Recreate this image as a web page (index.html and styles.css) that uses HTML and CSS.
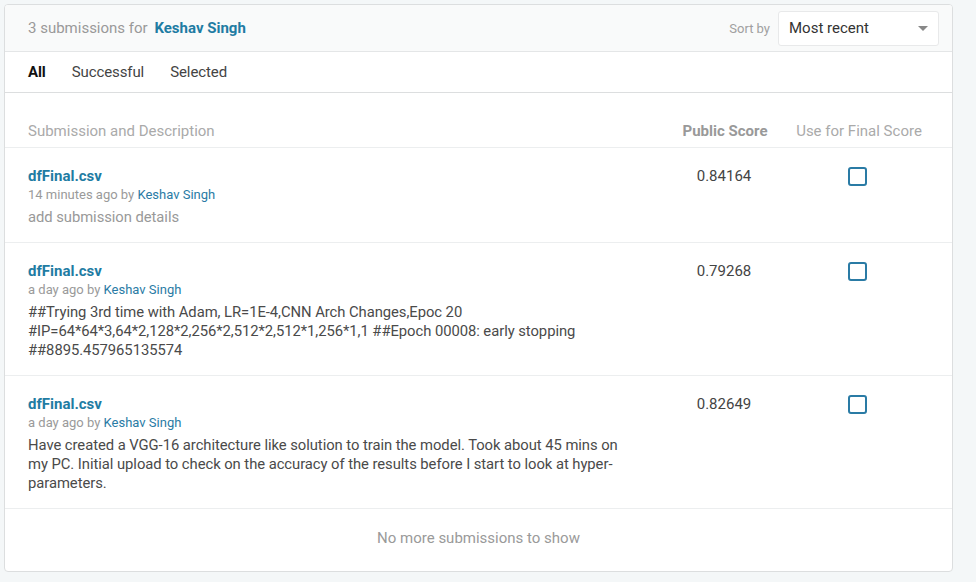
FILE: index.html
```html
<!DOCTYPE html>
<html>
<head>
<meta charset="utf-8">
<link rel="stylesheet" href="styles.css">
</head>
<body>
<div class="card">
  <div class="header">
    <div class="title"><span class="count">3 submissions for</span> <a class="user">Keshav Singh</a></div>
    <div class="sort">
      <span class="sort-label">Sort by</span>
      <div class="select"><span>Most recent</span><span class="caret"></span></div>
    </div>
  </div>
  <div class="tabs">
    <span class="tab active">All</span>
    <span class="tab">Successful</span>
    <span class="tab">Selected</span>
  </div>
  <div class="colhead">
    <div class="c-desc">Submission and Description</div>
    <div class="c-score">Public Score</div>
    <div class="c-final">Use for Final Score</div>
  </div>
  <div class="row">
    <div class="c-desc">
      <div class="file">dfFinal.csv</div>
      <div class="meta">14 minutes ago by <span class="by">Keshav Singh</span></div>
      <div class="desc muted">add submission details</div>
    </div>
    <div class="c-score score">0.84164</div>
    <div class="c-final"><span class="check"></span></div>
  </div>
  <div class="row">
    <div class="c-desc">
      <div class="file">dfFinal.csv</div>
      <div class="meta">a day ago by <span class="by">Keshav Singh</span></div>
      <div class="desc">##Trying 3rd time with Adam, LR=1E-4,CNN Arch Changes,Epoc 20<br>#IP=64*64*3,64*2,128*2,256*2,512*2,512*1,256*1,1 ##Epoch 00008: early stopping<br>##8895.457965135574</div>
    </div>
    <div class="c-score score">0.79268</div>
    <div class="c-final"><span class="check"></span></div>
  </div>
  <div class="row">
    <div class="c-desc">
      <div class="file">dfFinal.csv</div>
      <div class="meta">a day ago by <span class="by">Keshav Singh</span></div>
      <div class="desc">Have created a VGG-16 architecture like solution to train the model. Took about 45 mins on<br>my PC. Initial upload to check on the accuracy of the results before I start to look at hyper-<br>parameters.</div>
    </div>
    <div class="c-score score">0.82649</div>
    <div class="c-final"><span class="check"></span></div>
  </div>
  <div class="footer">No more submissions to show</div>
</div>
</body>
</html>
```
FILE: styles.css
```css
* { box-sizing: border-box; }
html, body { margin: 0; }
body {
  background: #f4f7f8;
  font-family: Roboto, "Liberation Sans", sans-serif;
  padding: 4px 24px 0 4px;
}
.card {
  width: 949px;
  height: 568px;
  background: #fff;
  border: 1px solid #dcdedf;
  border-radius: 4px;
  overflow: hidden;
}
.header {
  height: 47px;
  background: #f9fafa;
  border-bottom: 1px solid #e4e6e7;
  display: flex;
  align-items: center;
  justify-content: space-between;
  padding: 0 13px 0 23px;
}
.title { font-size: 15px; }
.count { color: #999; }
.user { color: #1f7ca3; font-weight: bold; margin-left: 3px; }
.sort { display: flex; align-items: center; gap: 8px; }
.sort-label { color: #a0a0a0; font-size: 13px; }
.select {
  width: 161px;
  height: 35px;
  background: #fff;
  border: 1px solid #e8e9ea;
  border-radius: 3px;
  display: flex;
  align-items: center;
  justify-content: space-between;
  padding: 0 10px 0 10px;
  font-size: 15px;
  color: #333;
}
.caret {
  width: 0; height: 0;
  border-left: 5px solid transparent;
  border-right: 5px solid transparent;
  border-top: 5px solid #888;
}
.tabs {
  height: 41px;
  border-bottom: 1px solid #dcdedf;
  display: flex;
  align-items: center;
  padding-left: 23px;
  gap: 26px;
  font-size: 15px;
  color: #444;
  padding-bottom: 1px;
}
.tab { letter-spacing: -0.1px; }
.tab.active { color: #111; font-weight: bold; }
.colhead, .row {
  display: grid;
  grid-template-columns: 1fr 130px 140px;
  padding: 0 23px;
}
.colhead {
  margin-top: 29px;
  height: 26px;
  border-bottom: 1px solid #eceeef;
  font-size: 15px;
  color: #aaa;
  align-items: start;
}
.colhead .c-score { font-weight: bold; color: #999; padding-left: 2px; }
.c-score, .c-final { text-align: center; }
.row {
  border-bottom: 1px solid #eceeef;
  padding-top: 19px;
  padding-bottom: 15px;
}
.file { color: #1f7ca3; font-weight: bold; font-size: 15px; line-height: 18px; }
.meta { color: #9a9a9a; font-size: 13px; line-height: 19px; }
.by { color: #2a7ba5; }
.desc { font-size: 14.8px; line-height: 19px; color: #4a4a4a; margin-top: 4px; letter-spacing: -0.05px; }
.desc.muted { color: #999; }
.score { font-size: 15px; color: #444; line-height: 18px; }
.check {
  display: inline-block;
  width: 19px;
  height: 19px;
  border: 2px solid #2a7ba5;
  border-radius: 3px;
  margin-left: -3px;
}
.footer {
  text-align: center;
  color: #9a9a9a;
  font-size: 15px;
  padding-top: 20px;
}
```
